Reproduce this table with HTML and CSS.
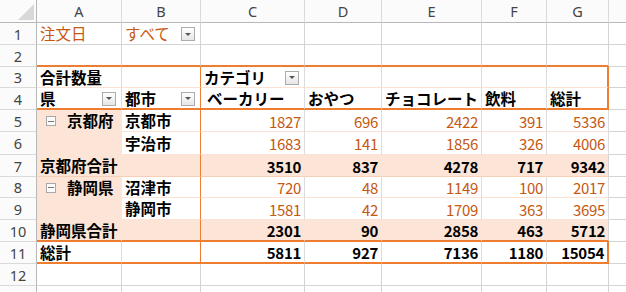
FILE: index.html
```html
<!DOCTYPE html>
<html lang="ja">
<head>
<meta charset="utf-8">
<link rel="stylesheet" href="styles.css">
</head>
<body>
<div class="sheet">
  <!-- column headers -->
  <div class="c corner"><span class="tri"></span></div>
  <div class="c hd">A</div><div class="c hd">B</div><div class="c hd">C</div><div class="c hd">D</div><div class="c hd">E</div><div class="c hd">F</div><div class="c hd">G</div><div class="c hd last"></div>

  <!-- row 1 -->
  <div class="c rh">1</div>
  <div class="c or">注文日</div>
  <div class="c or">すべて<span class="dd"></span></div>
  <div class="c"></div><div class="c"></div><div class="c"></div><div class="c"></div><div class="c"></div><div class="c last"></div>

  <!-- row 2 -->
  <div class="c rh">2</div>
  <div class="c obb"></div><div class="c obb"></div><div class="c obb"></div><div class="c obb"></div><div class="c obb"></div><div class="c obb"></div><div class="c obb"></div><div class="c last"></div>

  <!-- row 3 -->
  <div class="c rh">3</div>
  <div class="c pv b">合計数量</div>
  <div class="c pv vo"></div>
  <div class="c pv b">カテゴリ<span class="dd"></span></div>
  <div class="c pv"></div><div class="c pv"></div><div class="c pv"></div>
  <div class="c pv orr"></div>
  <div class="c last"></div>

  <!-- row 4 -->
  <div class="c rh">4</div>
  <div class="c pv obb b">県<span class="dd"></span></div>
  <div class="c pv obb vo b">都市<span class="dd"></span></div>
  <div class="c pv obb b ind">ベーカリー</div>
  <div class="c pv obb b">おやつ</div>
  <div class="c pv obb b">チョコレート</div>
  <div class="c pv obb b">飲料</div>
  <div class="c pv obb orr b">総計</div>
  <div class="c last"></div>

  <!-- row 5 -->
  <div class="c rh">5</div>
  <div class="c pk pkb b grp"><span class="col"></span>京都府</div>
  <div class="c pv vo b">京都市</div>
  <div class="c pv num or">1827</div>
  <div class="c pv num or">696</div>
  <div class="c pv num or">2422</div>
  <div class="c pv num or">391</div>
  <div class="c pv num or">5336</div>
  <div class="c last"></div>

  <!-- row 6 -->
  <div class="c rh">6</div>
  <div class="c pk pkb"></div>
  <div class="c pv vo b">宇治市</div>
  <div class="c pv num or">1683</div>
  <div class="c pv num or">141</div>
  <div class="c pv num or">1856</div>
  <div class="c pv num or">326</div>
  <div class="c pv num or">4006</div>
  <div class="c last"></div>

  <!-- row 7 -->
  <div class="c rh">7</div>
  <div class="c pk b">京都府合計</div>
  <div class="c pk vo"></div>
  <div class="c pk num b">3510</div>
  <div class="c pk num b">837</div>
  <div class="c pk num b">4278</div>
  <div class="c pk num b">717</div>
  <div class="c pk num b gr">9342</div>
  <div class="c last"></div>

  <!-- row 8 -->
  <div class="c rh">8</div>
  <div class="c pk pkb b grp"><span class="col"></span>静岡県</div>
  <div class="c pv vo b">沼津市</div>
  <div class="c pv num or">720</div>
  <div class="c pv num or">48</div>
  <div class="c pv num or">1149</div>
  <div class="c pv num or">100</div>
  <div class="c pv num or">2017</div>
  <div class="c last"></div>

  <!-- row 9 -->
  <div class="c rh">9</div>
  <div class="c pk pkb"></div>
  <div class="c pv vo b">静岡市</div>
  <div class="c pv num or">1581</div>
  <div class="c pv num or">42</div>
  <div class="c pv num or">1709</div>
  <div class="c pv num or">363</div>
  <div class="c pv num or">3695</div>
  <div class="c last"></div>

  <!-- row 10 -->
  <div class="c rh">10</div>
  <div class="c pk obb b">静岡県合計</div>
  <div class="c pk obb vo"></div>
  <div class="c pk obb num b">2301</div>
  <div class="c pk obb num b">90</div>
  <div class="c pk obb num b">2858</div>
  <div class="c pk obb num b">463</div>
  <div class="c pk obb num b gr">5712</div>
  <div class="c last"></div>

  <!-- row 11 -->
  <div class="c rh">11</div>
  <div class="c pv obb b">総計</div>
  <div class="c pv obb vo"></div>
  <div class="c pv obb num b">5811</div>
  <div class="c pv obb num b">927</div>
  <div class="c pv obb num b">7136</div>
  <div class="c pv obb num b">1180</div>
  <div class="c pv obb orr num b">15054</div>
  <div class="c last"></div>

  <!-- row 12 -->
  <div class="c rh">12</div>
  <div class="c"></div><div class="c"></div><div class="c"></div><div class="c"></div><div class="c"></div><div class="c"></div><div class="c"></div><div class="c last"></div>

  <!-- row 13 (only a sliver is visible) -->
  <div class="c rh"></div>
  <div class="c"></div><div class="c"></div><div class="c"></div><div class="c"></div><div class="c"></div><div class="c"></div><div class="c"></div><div class="c last"></div>
</div>
</body>
</html>
```

FILE: styles.css
```css
html, body {
  margin: 0;
  padding: 0;
  background: #ffffff;
  overflow: hidden;
}

.sheet {
  display: grid;
  grid-template-columns: 37px 85px 79px 104px 77px 100px 65px 62px 1fr;
  grid-template-rows: 23px 22px 22px 21px 22px 22px 23px 22px 21px 22px 22px 22px 22px 22px;
  width: 626px;
  height: 292px;
  overflow: hidden;
  font-family: "Noto Sans CJK JP", "Noto Sans", sans-serif;
  font-size: 15.5px;
  color: #000;
}

.c {
  box-sizing: border-box;
  border-right: 1px solid #d4d4d4;
  border-bottom: 1px solid #d4d4d4;
  padding: 1px 3px 0;
  display: flex;
  align-items: center;
  white-space: nowrap;
  line-height: 1;
  min-width: 0;
}

.c.last {
  border-right: none;
}

/* headers */
.hd {
  justify-content: center;
  color: #444;
  font-family: "Noto Sans", sans-serif;
  font-size: 14.5px;
  background: #fbfbfb;
  border-bottom-color: #b8b8b8;
  border-right-color: #dadada;
}

.corner {
  background: #fbfbfb;
  border-bottom-color: #b8b8b8;
  border-right-color: #b8b8b8;
  justify-content: flex-end;
  align-items: flex-end;
  padding: 0 2px 2px 0;
}

.tri {
  width: 0;
  height: 0;
  border-left: 16px solid transparent;
  border-bottom: 16px solid #d8d8d8;
}

.rh {
  justify-content: center;
  color: #444;
  font-family: "Noto Sans", sans-serif;
  font-size: 14.5px;
  background: #fbfbfb;
  border-right-color: #b8b8b8;
  border-bottom-color: #dadada;
}

/* text styles */
.or {
  color: #c65911;
}

.b {
  font-weight: 700;
}

.num {
  justify-content: flex-end;
  letter-spacing: -0.3px;
  padding-right: 3px;
  font-size: 15px;
}

.ind {
  padding-left: 6px;
}

/* pivot area */
.pv {
  border-bottom-color: #fbe2d4;
  border-right-color: #dcdcdc;
}

.pk {
  background: #fce4d6;
  border-right-color: #fce4d6;
  border-bottom-color: #f6cfb6;
}

.pkb {
  border-bottom-color: #fce4d6;
}

.pk.gr {
  border-right-color: #d4d4d4;
}

.vo {
  border-right-color: #ed7d31;
}

.obb {
  border-bottom: 2px solid #ed7d31;
}

.orr {
  border-right: 2px solid #ed7d31;
}

/* dropdown button */
.dd {
  margin-left: auto;
  margin-right: 2px;
  width: 14px;
  height: 14px;
  box-sizing: border-box;
  border: 1px solid #acacac;
  background: linear-gradient(#ffffff, #e6e6e6);
  display: flex;
  align-items: center;
  justify-content: center;
  flex: none;
}

.dd::after {
  content: "";
  width: 0;
  height: 0;
  border-left: 3px solid transparent;
  border-right: 3px solid transparent;
  border-top: 3px solid #555;
}

/* collapse button */
.grp {
  padding-left: 9px;
}

.col {
  width: 10px;
  height: 10px;
  box-sizing: border-box;
  border: 1px solid #a8a8a8;
  background: #fbfbfb;
  margin-right: 11px;
  display: flex;
  align-items: center;
  justify-content: center;
  flex: none;
}

.col::after {
  content: "";
  width: 6px;
  height: 1px;
  background: #777;
}
```
